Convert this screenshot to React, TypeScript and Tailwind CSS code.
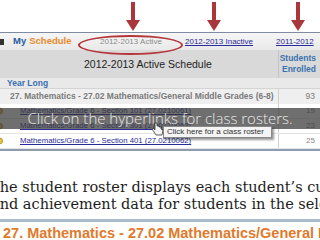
import React from "react";

function Arrow({ x }: { x: number }) {
  return (
    <g fill="#a8363a">
      <rect x={x - 2} y={2} width={4} height={22} />
      <polygon points={`${x - 7},${20} ${x + 7},${20} ${x},${31}`} />
    </g>
  );
}

function Bullet() {
  return <span className="absolute left-[-4px] top-1/2 -translate-y-1/2 w-[7px] h-[7px] rounded-full bg-[#e6c24a] border border-[#b8962a]" />;
}

export default function App() {
  return (
    <div className="w-[320px] h-[240px] overflow-hidden bg-white relative" style={{ fontFamily: '"Liberation Sans", Arial, sans-serif' }}>
      {/* arrows zone */}
      <div className="h-[32px] relative">
        <svg width="320" height="32" className="absolute left-0 top-0">
          <Arrow x={133} />
          <Arrow x={214} />
          <Arrow x={298} />
        </svg>
      </div>
      {/* panel */}
      <div className="border-t border-[#7d8ca3] relative">
        <div className="h-[17px] flex items-center bg-gradient-to-b from-[#f6f6f6] to-[#e9e9e9] whitespace-nowrap">
          <div className="w-[100px] shrink-0 flex items-center text-[9.5px]">
            <span className="shrink-0 w-[4px] h-[6px] bg-[#333] mr-[9px]" />
            <span className="font-bold text-[#2d5aa0]">My</span>
            <span className="font-bold text-[#e8892c] ml-[3px]">Schedule</span>
          </div>
          <span className="w-[85px] shrink-0 text-[#8a8a8a] text-[8px]">2012-2013 Active</span>
          <a className="w-[91px] shrink-0 text-[#2a2a9a] underline text-[8px]">2012-2013 Inactive</a>
          <a className="shrink-0 text-[#2a2a9a] underline text-[8px]">2011-2012</a>
        </div>
        <div className="h-[28px] grid grid-cols-[278px_1fr] bg-[#d9d9d9]">
          <div className="flex items-center pl-[84px] pt-[2px] text-[10.5px] text-[#222]">2012-2013 Active Schedule</div>
          <div className="border-l border-[#c4c4c4] flex flex-col items-end justify-center pr-[4px] text-[8.5px] font-bold text-[#3a72b0] leading-[11px]">
            <span>Students</span>
            <span>Enrolled</span>
          </div>
        </div>
        <div className="h-[11px] flex items-center bg-[#e9e9e9] pl-[7px] text-[8.5px] font-bold text-[#3a6eb0] border-b border-[#d4d4d4]">Year Long</div>
        <div className="h-[15px] grid grid-cols-[278px_1fr] bg-[#efefef] text-[8.5px] text-[#7a7a7a]">
          <div className="flex items-center pl-[10px] font-bold whitespace-nowrap">27. Mathematics - 27.02 Mathematics/General Middle Grades (6-8)</div>
          <div className="border-l border-[#d0d0d0] flex items-center justify-end pr-[5px]">93</div>
        </div>
        {[
          ["Mathematics/Grade 6  - Section 101 (27.0210061)", "19"],
          ["Mathematics/Grade 6  - Section 301 (27.0210063)", "23"],
          ["Mathematics/Grade 6  - Section 401 (27.0210062)", "25"],
        ].map(([t, n]) => (
          <div key={t} className="h-[15px] grid grid-cols-[278px_1fr] bg-white text-[7.8px] relative border-b border-[#e4e4e4]">
            <Bullet />
            <div className="flex items-center pl-[20px] whitespace-nowrap">
              <a className="text-[#2a2a9a] underline">{t}</a>
            </div>
            <div className="border-l border-[#d0d0d0] flex items-center justify-end pr-[5px] text-[#888] text-[8px]">{n}</div>
          </div>
        ))}
        <div className="h-[2px] bg-[#8e9bb0]" />
        {/* red ellipse */}
        <div className="absolute left-[78px] top-[2px] w-[105px] h-[20px] rounded-[50%] border-2 border-[#b5373c]" />
        {/* overlay band */}
        <div className="absolute left-0 top-[75px] w-[320px] h-[21px] bg-[rgba(55,55,55,0.72)] flex items-center justify-center text-[#e8e8e8] text-[15px] font-light whitespace-nowrap" style={{ fontFamily: '"Open Sans", sans-serif' }}>
          Click on the hyperlinks for class rosters.
        </div>
        {/* cursor + tooltip */}
        <svg className="absolute left-[151px] top-[89px]" width="13" height="14" viewBox="0 0 13 14">
          <path d="M4 1 v7 l-2 -2 l-1 1 l4 6 h6 l1 -5 l-2 -1 v-2 l-2 0 v-1 l-2 0 v-3 z" fill="#f5f5f5" stroke="#333" strokeWidth="0.8" />
        </svg>
        <div className="absolute left-[163px] top-[93px] w-[109px] h-[12px] bg-[#f4f4f4] border border-[#888] shadow-[2px_2px_2px_rgba(0,0,0,0.4)] text-[8px] text-[#333] flex items-center pl-[3px] whitespace-nowrap">
          Click here for a class roster
        </div>
      </div>
      {/* paragraph */}
      <div className="mt-[28px] ml-[-10px] whitespace-nowrap text-[14.5px] leading-[17px] text-[#1e1e1e]" style={{ fontFamily: '"DejaVu Serif", serif' }}>
        <div>The student roster displays each student’s current</div>
        <div className="ml-[1px]">and achievement data for students in the selected</div>
      </div>
      <div className="mt-[6px] h-[3px] bg-[#a9bccb]" />
      <div className="mt-[2px] ml-[3px] whitespace-nowrap text-[14.5px] leading-[18px] font-bold text-[#e07a2c]">27. Mathematics - 27.02 Mathematics/General Middle Grades</div>
    </div>
  );
}
